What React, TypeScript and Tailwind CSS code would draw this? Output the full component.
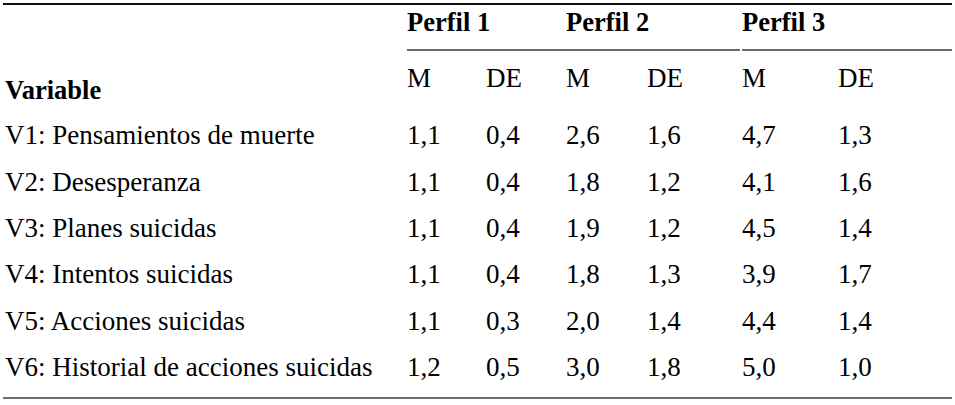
const rows = [
  ["V1: Pensamientos de muerte", "1,1", "0,4", "2,6", "1,6", "4,7", "1,3"],
  ["V2: Desesperanza", "1,1", "0,4", "1,8", "1,2", "4,1", "1,6"],
  ["V3: Planes suicidas", "1,1", "0,4", "1,9", "1,2", "4,5", "1,4"],
  ["V4: Intentos suicidas", "1,1", "0,4", "1,8", "1,3", "3,9", "1,7"],
  ["V5: Acciones suicidas", "1,1", "0,3", "2,0", "1,4", "4,4", "1,4"],
  ["V6: Historial de acciones suicidas", "1,2", "0,5", "3,0", "1,8", "5,0", "1,0"],
];

export default function App() {
  return (
    <div className="w-[955px] h-[405px] bg-white pt-[3px] text-black [font-family:'Liberation_Serif','Times_New_Roman',serif] text-[27px]">
      <div className="ml-[3px] w-[949px] border-t-2 border-b-2 border-t-[#111] border-b-[#6e6e6e] pb-[6.5px]">
        <div className="grid grid-cols-[404px_79px_80px_81px_95px_96px_114px]">
          {/* header row: profiles */}
          <div className="h-[46px]" />
          {["Perfil 1", "Perfil 2", "Perfil 3"].map((p, i) => (
            <div
              key={p}
              className={`col-span-2 h-[46px] pt-[2px] border-b-2 border-[#6a6a6a] font-bold text-[26.5px] leading-[30px] ${i === 1 ? "mr-[2px]" : ""}`}
            >
              {p}
            </div>
          ))}

          {/* header row: M / DE */}
          <div className="h-[61.2px] pt-[24px] pl-[2px] font-bold text-[26.5px] leading-[30px]">Variable</div>
          {["M", "DE", "M", "DE", "M", "DE"].map((h, i) => (
            <div key={i} className="h-[61.2px] pt-[12px] leading-[30px]">
              {h}
            </div>
          ))}

          {rows.map((r) =>
            r.map((c, j) => (
              <div
                key={r[0] + j}
                className={`h-[46.4px] leading-[46.4px] whitespace-nowrap ${j === 0 ? "pl-[2px]" : ""}`}
              >
                {c}
              </div>
            ))
          )}
        </div>
      </div>
    </div>
  );
}
